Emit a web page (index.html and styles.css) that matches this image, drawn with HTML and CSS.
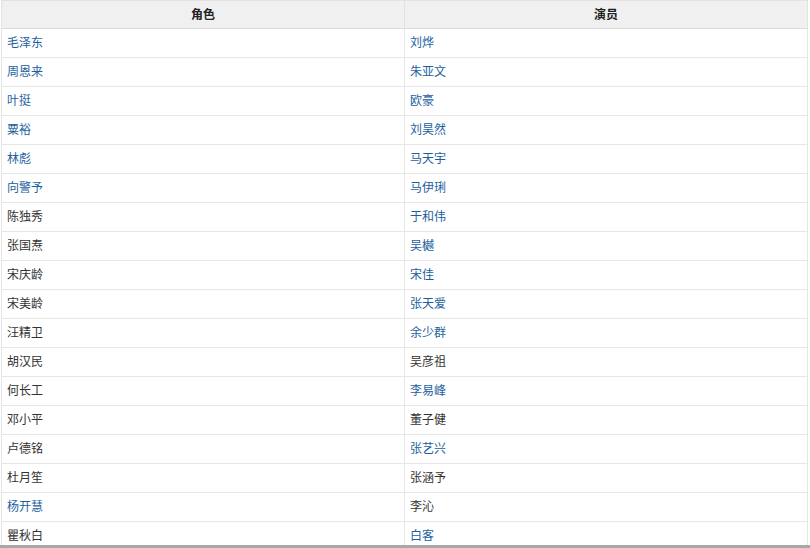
FILE: index.html
```html
<!DOCTYPE html>
<html lang="zh">
<head>
<meta charset="utf-8">
<link rel="stylesheet" href="styles.css">
</head>
<body>
<div class="wrap">
<table class="cast">
<thead>
<tr><th>角色</th><th>演员</th></tr>
</thead>
<tbody>
<tr><td><a class="lnk">毛泽东</a></td><td><a class="lnk">刘烨</a></td></tr>
<tr><td><a class="lnk">周恩来</a></td><td><a class="lnk">朱亚文</a></td></tr>
<tr><td><a class="lnk">叶挺</a></td><td><a class="lnk">欧豪</a></td></tr>
<tr><td><a class="lnk">粟裕</a></td><td><a class="lnk">刘昊然</a></td></tr>
<tr><td><a class="lnk">林彪</a></td><td><a class="lnk">马天宇</a></td></tr>
<tr><td><a class="lnk">向警予</a></td><td><a class="lnk">马伊琍</a></td></tr>
<tr><td>陈独秀</td><td><a class="lnk">于和伟</a></td></tr>
<tr><td>张国焘</td><td><a class="lnk">吴樾</a></td></tr>
<tr><td>宋庆龄</td><td><a class="lnk">宋佳</a></td></tr>
<tr><td>宋美龄</td><td><a class="lnk">张天爱</a></td></tr>
<tr><td>汪精卫</td><td><a class="lnk">余少群</a></td></tr>
<tr><td>胡汉民</td><td>吴彦祖</td></tr>
<tr><td>何长工</td><td><a class="lnk">李易峰</a></td></tr>
<tr><td>邓小平</td><td>董子健</td></tr>
<tr><td>卢德铭</td><td><a class="lnk">张艺兴</a></td></tr>
<tr><td>杜月笙</td><td>张涵予</td></tr>
<tr><td><a class="lnk">杨开慧</a></td><td>李沁</td></tr>
<tr><td>瞿秋白</td><td><a class="lnk">白客</a></td></tr>
</tbody>
</table>
</div>
</body>
</html>
```
FILE: styles.css
```css
html, body {
  margin: 0;
  padding: 0;
  background: #ffffff;
}
body {
  height: 548px;
  overflow: hidden;
  font-family: "Noto Sans CJK SC", "Liberation Sans", sans-serif;
  font-size: 12px;
  color: #333333;
}
.wrap {
  height: 545px;
  overflow: hidden;
  border-bottom: 3px solid #a8a8a8;
  padding-left: 1px;
}
.cast {
  width: 807px;
  border-collapse: collapse;
  table-layout: fixed;
}
.cast th, .cast td {
  border: 1px solid #e6e6e6;
  padding: 0 5px 2px;
  line-height: 16px;
  text-align: left;
  vertical-align: middle;
}
.cast th {
  height: 25px;
  padding-bottom: 2px;
  background: #f0f0f0;
  text-align: center;
  font-weight: bold;
  color: #222222;
  border-color: #e2e2e2;
  border-bottom-color: #dcdcdc;
}
.cast td {
  height: 26px;
}
.lnk {
  color: #1d5f9e;
  text-decoration: none;
}
```
